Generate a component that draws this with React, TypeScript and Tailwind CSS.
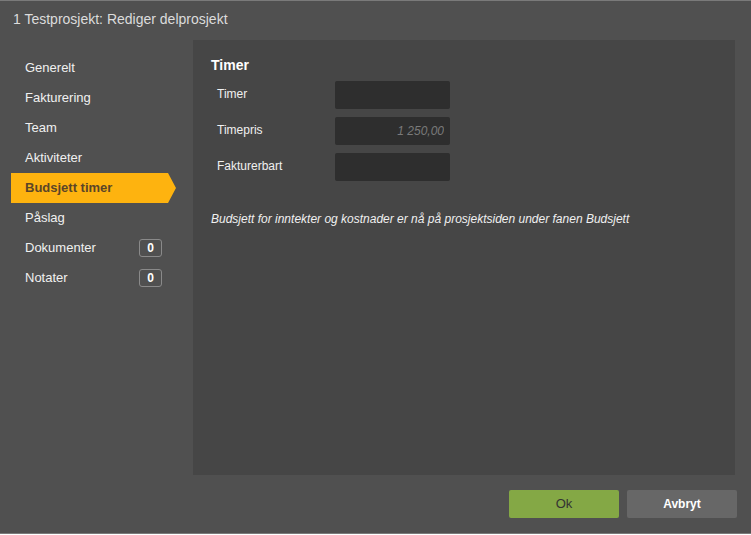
import { useState } from "react";

const menuItems: { label: string; badge?: number }[] = [
  { label: "Generelt" },
  { label: "Fakturering" },
  { label: "Team" },
  { label: "Aktiviteter" },
  { label: "Budsjett timer" },
  { label: "Påslag" },
  { label: "Dokumenter", badge: 0 },
  { label: "Notater", badge: 0 },
];

const fields = [
  { label: "Timer", placeholder: "" },
  { label: "Timepris", placeholder: "1 250,00" },
  { label: "Fakturerbart", placeholder: "" },
];

export default function App() {
  const [active, setActive] = useState("Budsjett timer");

  return (
    <div className="h-[535px] w-[751px] bg-white font-['Liberation_Sans',Arial,sans-serif]">
      <div className="flex h-[534px] flex-col border-y border-[#7a7a7a] bg-[#505050] text-[#ececec]">
        {/* title bar */}
        <div className="flex h-[39px] shrink-0 items-center pl-[13px] pb-[3px] text-[14px] text-[#dcdcdc]">
          1 Testprosjekt: Rediger delprosjekt
        </div>

        <div className="flex min-h-0 flex-1">
          {/* side menu */}
          <nav className="w-[193px] shrink-0 pt-[13px] pl-[11px]">
            {menuItems.map((item) => {
              const isActive = item.label === active;
              return (
                <button
                  key={item.label}
                  onClick={() => setActive(item.label)}
                  className={
                    isActive
                      ? "flex h-[30px] w-[165px] items-center bg-[#feb30f] pl-[14px] text-left text-[13px] font-bold text-[#5b4528] [clip-path:polygon(0_0,157px_0,100%_50%,157px_100%,0_100%)]"
                      : "flex h-[30px] w-[157px] items-center pl-[14px] text-left text-[13px] text-[#f0f0f0]"
                  }
                >
                  <span>{item.label}</span>
                  {item.badge !== undefined && (
                    <span className="mr-[6px] ml-auto flex h-[18px] w-[23px] items-center justify-center rounded-[3px] border border-[#8a8a8a] text-[12px] font-bold text-white">
                      {item.badge}
                    </span>
                  )}
                </button>
              );
            })}
          </nav>

          {/* content panel */}
          <div className="mr-[16px] flex-1 bg-[#464646] pt-[17px] pl-[18px]">
            <h2 className="text-[14px] leading-[16px] font-bold text-white">Timer</h2>
            <div className="mt-[8px] flex flex-col gap-[8px]">
              {fields.map((f) => (
                <div key={f.label} className="flex items-center">
                  <label className="w-[124px] pl-[6px] pb-[2px] text-[12px] text-[#f0f0f0]">{f.label}</label>
                  <input
                    placeholder={f.placeholder}
                    className="h-[28px] w-[115px] rounded-[2px] bg-[#2e2e2e] pr-[6px] text-right text-[12px] text-white italic outline-none placeholder:text-[#7a7a7a]"
                  />
                </div>
              ))}
            </div>
            <p className="mt-[29px] text-[12px] text-[#f0f0f0] italic">
              Budsjett for inntekter og kostnader er nå på prosjektsiden under fanen Budsjett
            </p>
          </div>
        </div>

        {/* footer */}
        <div className="flex h-[58px] shrink-0 items-center justify-end gap-[8px] pr-[14px]">
          <button className="h-[28px] w-[110px] rounded-[2px] bg-[#84a845] text-[13px] text-[#333]">Ok</button>
          <button className="h-[28px] w-[110px] rounded-[2px] bg-[#676767] text-[12px] font-bold text-white">
            Avbryt
          </button>
        </div>
      </div>
    </div>
  );
}
